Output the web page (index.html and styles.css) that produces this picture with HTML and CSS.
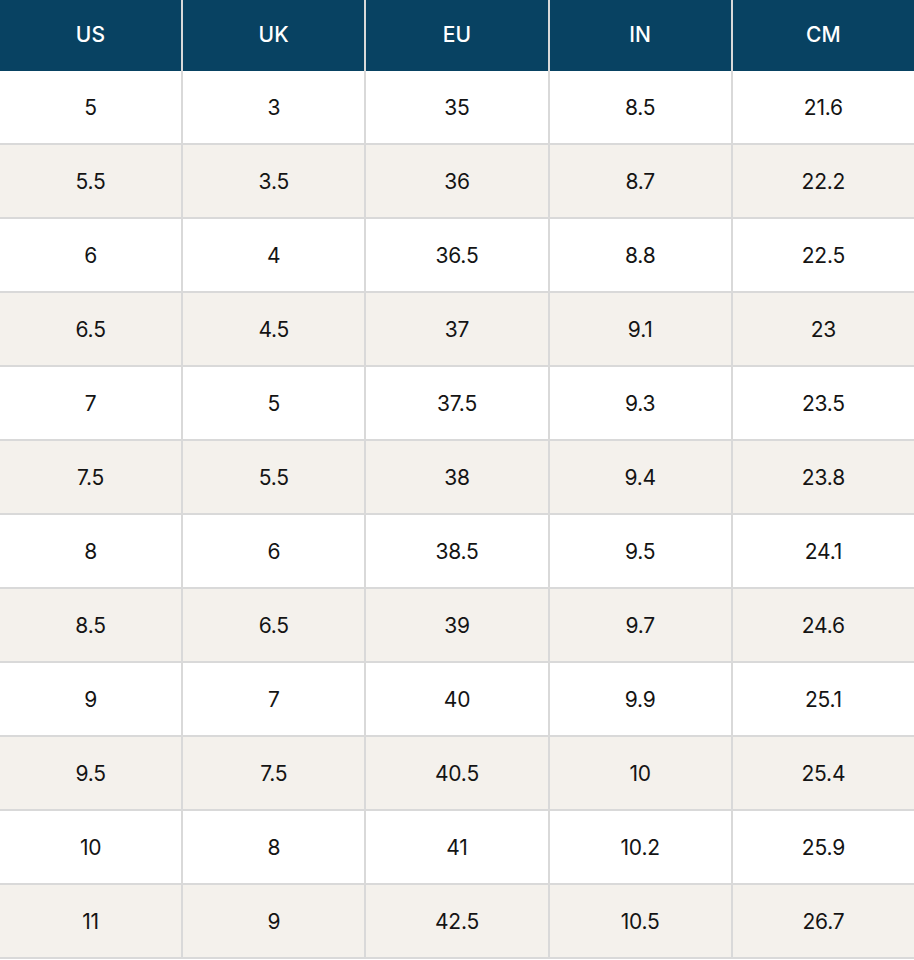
FILE: index.html
```html
<!DOCTYPE html>
<html lang="en">
<head>
<meta charset="utf-8">
<title>Size chart</title>
<link rel="stylesheet" href="styles.css">
</head>
<body>
<div class="chart">
  <div class="cell head">US</div><div class="cell head">UK</div><div class="cell head">EU</div><div class="cell head">IN</div><div class="cell head">CM</div>
  <div class="cell">5</div><div class="cell">3</div><div class="cell">35</div><div class="cell">8.5</div><div class="cell">21.6</div>
  <div class="cell alt">5.5</div><div class="cell alt">3.5</div><div class="cell alt">36</div><div class="cell alt">8.7</div><div class="cell alt">22.2</div>
  <div class="cell">6</div><div class="cell">4</div><div class="cell">36.5</div><div class="cell">8.8</div><div class="cell">22.5</div>
  <div class="cell alt">6.5</div><div class="cell alt">4.5</div><div class="cell alt">37</div><div class="cell alt">9.1</div><div class="cell alt">23</div>
  <div class="cell">7</div><div class="cell">5</div><div class="cell">37.5</div><div class="cell">9.3</div><div class="cell">23.5</div>
  <div class="cell alt">7.5</div><div class="cell alt">5.5</div><div class="cell alt">38</div><div class="cell alt">9.4</div><div class="cell alt">23.8</div>
  <div class="cell">8</div><div class="cell">6</div><div class="cell">38.5</div><div class="cell">9.5</div><div class="cell">24.1</div>
  <div class="cell alt">8.5</div><div class="cell alt">6.5</div><div class="cell alt">39</div><div class="cell alt">9.7</div><div class="cell alt">24.6</div>
  <div class="cell">9</div><div class="cell">7</div><div class="cell">40</div><div class="cell">9.9</div><div class="cell">25.1</div>
  <div class="cell alt">9.5</div><div class="cell alt">7.5</div><div class="cell alt">40.5</div><div class="cell alt">10</div><div class="cell alt">25.4</div>
  <div class="cell">10</div><div class="cell">8</div><div class="cell">41</div><div class="cell">10.2</div><div class="cell">25.9</div>
  <div class="cell alt">11</div><div class="cell alt">9</div><div class="cell alt">42.5</div><div class="cell alt">10.5</div><div class="cell alt">26.7</div>
</div>
</body>
</html>
```

FILE: styles.css
```css
html, body {
  margin: 0;
  padding: 0;
  background: #ffffff;
}
body {
  font-family: Inter, "Liberation Sans", sans-serif;
  color: #141414;
}
.chart {
  width: 914px;
  display: grid;
  grid-template-columns: repeat(5, 1fr);
  grid-template-rows: 69px repeat(12, 72px);
  column-gap: 2px;
  row-gap: 2px;
  background: #d9d9d9;
  padding-bottom: 2px;
}
.cell {
  display: flex;
  align-items: center;
  justify-content: center;
  background: #ffffff;
  font-size: 21px;
  font-weight: 400;
  letter-spacing: -0.2px;
}
.cell.alt {
  background: #f4f1ec;
}
.cell.head {
  align-self: start;
  height: 71px;
  margin-bottom: -2px;
  padding-bottom: 2px;
  box-sizing: border-box;
  position: relative;
  z-index: 1;
  background: #084262;
  color: #ffffff;
  font-weight: 500;
  font-size: 21px;
  letter-spacing: 0.2px;
}
```
